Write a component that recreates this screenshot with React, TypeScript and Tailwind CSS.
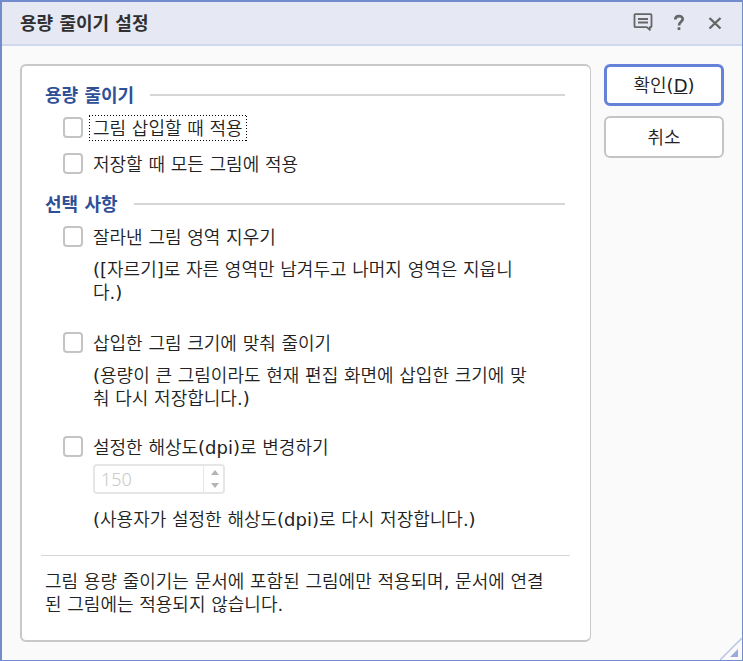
import React, { useState } from 'react';

interface CheckOptionProps {
  id: string;
  label: string;
  focused?: boolean;
}

const CheckOption: React.FC<CheckOptionProps> = ({ id, label, focused = false }) => {
  const [checked, setChecked] = useState(false);

  return (
    <div className="ml-[18px] flex h-[26px] items-center">
      <input
        id={id}
        type="checkbox"
        checked={checked}
        onChange={(e) => setChecked(e.target.checked)}
        className="mr-1.5 mb-px h-[21px] w-5 shrink-0 appearance-none rounded-[4px] border-2 border-[#c4c4c4] bg-white checked:bg-[#5b7fd6]"
      />
      <label
        htmlFor={id}
        className={`flex h-[26px] items-center px-1 ${
          focused
            ? 'bg-[repeating-linear-gradient(90deg,#000_0_1px,transparent_1px_3px),repeating-linear-gradient(90deg,#000_0_1px,transparent_1px_3px),repeating-linear-gradient(0deg,#000_0_1px,transparent_1px_3px),repeating-linear-gradient(0deg,#000_0_1px,transparent_1px_3px)] bg-[size:100%_1px,100%_1px,1px_100%,1px_100%] bg-[position:left_top,left_bottom,left_top,right_top] bg-no-repeat'
            : ''
        }`}
      >
        {label}
      </label>
    </div>
  );
};

const SectionTitle: React.FC<{ children: React.ReactNode }> = ({ children }) => (
  <div className="flex items-center gap-4">
    <h2 className="font-['DejaVu_Sans','Noto_Sans_CJK_KR',sans-serif] font-bold text-[#2f4f96]">{children}</h2>
    <div className="mb-px h-0.5 flex-1 bg-[#d6d6d6]" />
  </div>
);

const App: React.FC = () => {
  return (
    <div className="relative flex min-h-screen flex-col border-2 border-r border-b border-[#738cce] bg-[#fafafa] font-['DejaVu_Sans','Noto_Sans_CJK_KR_DemiLight','Noto_Sans_CJK_KR',sans-serif] text-[18px] leading-[23px] text-[#222]">
      {/* Title bar */}
      <header className="flex h-11 items-center justify-between border-b-2 border-[#d0d8ec] bg-[#e6e8f4] pr-[17px] pl-[18px]">
        <h1 className="font-['DejaVu_Sans','Noto_Sans_CJK_KR',sans-serif] font-bold text-[#303030]">용량 줄이기 설정</h1>
        <div className="flex items-center gap-4 text-[#666]">
          <button type="button" aria-label="의견" className="size-5">
            <svg viewBox="0 0 20 20" className="size-5" fill="none" stroke="currentColor" strokeWidth="1.8" strokeLinejoin="round">
              <path d="M2.500 1.200h15a1 1 0 0 1 1 1v11a1 1 0 0 1-1 1h-.7v2.700l-3-2.700H2.500a1 1 0 0 1-1-1v-11a1 1 0 0 1 1-1z" />
              <path d="M5 6h10M5 9.500h10" />
            </svg>
          </button>
          <button type="button" aria-label="도움말" className="size-5">
            <svg viewBox="0 0 20 20" className="size-5" fill="none" stroke="currentColor" strokeWidth="2.700">
              <path d="M6.300 6.500C6.300 2 13.700 2 13.700 6c0 2.800-3.700 2.800-3.700 6.500M10 14.300v2.600" />
            </svg>
          </button>
          <button type="button" aria-label="닫기" className="size-5">
            <svg viewBox="0 0 20 20" className="size-5" fill="none" stroke="currentColor" strokeWidth="2.400">
              <path d="M4.500 5l11 10.500M15.500 5l-11 10.500" />
            </svg>
          </button>
        </div>
      </header>

      <div className="flex flex-1 items-start gap-[13px] px-[18px] py-[18px]">
        {/* Options */}
        <main className="min-w-0 flex-1 rounded-md border-2 border-r border-[#c8c8c8] bg-white px-[19px] pt-[18px] pb-6">
          <section className="pr-1.5 pl-1">
            <SectionTitle>용량 줄이기</SectionTitle>
            <div className="mt-2 flex flex-col gap-2.5">
              <CheckOption id="on-insert" label="그림 삽입할 때 적용" focused />
              <CheckOption id="on-save" label="저장할 때 모든 그림에 적용" />
            </div>
          </section>

          <section className="mt-4 pr-1.5 pl-1">
            <SectionTitle>선택 사항</SectionTitle>
            <div className="mt-2">
              <CheckOption id="crop" label="잘라낸 그림 영역 지우기" />
              <p className="mt-2 mr-7 ml-12 break-all">
                ([자르기]로 자른 영역만 남겨두고 나머지 영역은 지웁니다.)
              </p>
            </div>
            <div className="mt-[26px]">
              <CheckOption id="fit" label="삽입한 그림 크기에 맞춰 줄이기" />
              <p className="mt-2 mr-7 ml-12 break-all">
                (용량이 큰 그림이라도 현재 편집 화면에 삽입한 크기에 맞춰 다시 저장합니다.)
              </p>
            </div>
            <div className="mt-6">
              <CheckOption id="resolution" label="설정한 해상도(dpi)로 변경하기" />
              <div className="mt-1 ml-12 flex h-[30px] w-[132px] rounded-[4px] border-2 border-[#e6e6e6]">
                <input
                  type="number"
                  aria-label="해상도"
                  defaultValue={150}
                  disabled
                  className="w-0 min-w-0 flex-1 [appearance:textfield] bg-transparent pl-1.5 font-['Noto_Sans',sans-serif] font-light text-[#c8c8c8]"
                />
                <div className="flex w-5 flex-col border-l border-[#e6e6e6] pl-0.5">
                  <button type="button" disabled aria-label="늘리기" className="flex flex-1 items-center justify-center">
                    <svg viewBox="0 0 8 5" className="h-[5px] w-2 fill-[#b4b4b4]"><path d="M4 0l4 5H0z" /></svg>
                  </button>
                  <button type="button" disabled aria-label="줄이기" className="flex flex-1 items-center justify-center">
                    <svg viewBox="0 0 8 5" className="h-[5px] w-2 fill-[#b4b4b4]"><path d="M4 5l4-5H0z" /></svg>
                  </button>
                </div>
              </div>
              <p className="mt-3.5 ml-12">(사용자가 설정한 해상도(dpi)로 다시 저장합니다.)</p>
            </div>
          </section>

          <hr className="mt-6 mr-px border-[#d6d6d6]" />
          <p className="mt-3.5 mr-4 ml-1 break-all">
            그림 용량 줄이기는 문서에 포함된 그림에만 적용되며, 문서에 연결된 그림에는 적용되지 않습니다.
          </p>
        </main>

        {/* Actions */}
        <div className="flex w-[120px] shrink-0 flex-col gap-2.5">
          <button type="button" className="h-[42px] rounded-md border-[3px] border-[#6482d8] bg-white">
            확인(<u>D</u>)
          </button>
          <button type="button" className="h-[42px] rounded-md border-2 border-[#c4c4c4] bg-white">
            취소
          </button>
        </div>
      </div>

      {/* Resize grip */}
      <svg viewBox="0 0 22 22" className="absolute right-0 bottom-0 size-[22px]">
        <path d="M0 22L22 0" stroke="#b8c4e8" strokeWidth="1.500" />
        <path d="M10 19h8v-8z" fill="#9aaade" />
      </svg>
    </div>
  );
};

export default App;
